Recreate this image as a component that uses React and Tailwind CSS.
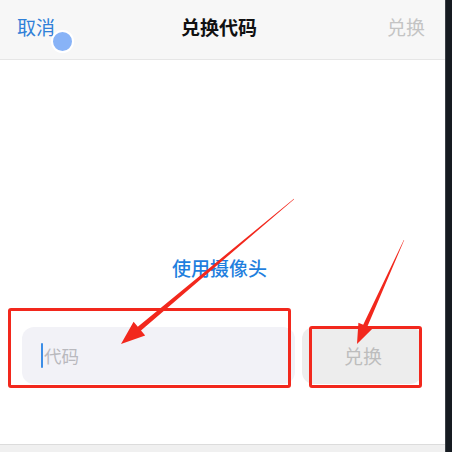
import React from "react";

function arrowPoints(t, p, headLen, headW, w0, w1) {
  const dx = p[0] - t[0];
  const dy = p[1] - t[1];
  const len = Math.hypot(dx, dy);
  const ux = dx / len;
  const uy = dy / len;
  const nx = -uy;
  const ny = ux;
  const bx = p[0] - ux * headLen;
  const by = p[1] - uy * headLen;
  const pts = [
    [t[0] + (nx * w0) / 2, t[1] + (ny * w0) / 2],
    [bx + (nx * w1) / 2, by + (ny * w1) / 2],
    [bx + (nx * headW) / 2, by + (ny * headW) / 2],
    [p[0], p[1]],
    [bx - (nx * headW) / 2, by - (ny * headW) / 2],
    [bx - (nx * w1) / 2, by - (ny * w1) / 2],
    [t[0] - (nx * w0) / 2, t[1] - (ny * w0) / 2],
  ];
  return pts.map((q) => q[0].toFixed(1) + "," + q[1].toFixed(1)).join(" ");
}

export default function App() {
  const font = { fontFamily: '"Noto Sans CJK SC", "Noto Sans", sans-serif' };
  return (
    <div className="relative flex w-[452px] h-[452px] overflow-hidden bg-white" style={font}>
      <div className="flex flex-col w-[445px] h-full">
        <div className="grid grid-cols-[1fr_auto_1fr] items-center h-[60px] pb-[6px] bg-[#f7f7f7] border-b border-[#e6e6e6] px-[17px] pr-[20px]">
          <span className="justify-self-start text-[19px] leading-[26px] text-[#2f80d8]">取消</span>
          <span className="text-[19px] leading-[26px] font-bold text-[#111111] pr-[4px]">兑换代码</span>
          <span className="justify-self-end text-[19px] leading-[26px] text-[#c4c4c4]">兑换</span>
        </div>
        <div className="flex flex-col flex-1 bg-white">
          <div className="pt-[195px] flex justify-center">
            <span className="text-[19px] leading-[26px] font-medium text-[#1f7fde] pr-[6px]">使用摄像头</span>
          </div>
          <div className="mt-[46px] flex h-[57px]">
            <div className="ml-[22px] w-[273px] h-full rounded-[12px] bg-[#f2f2f7] flex items-center pl-[19px]">
              <span className="w-[2px] h-[25px] bg-[#3b8de6] rounded-[1px]"></span>
              <span className="ml-[1px] text-[17.5px] leading-[24px] text-[#b9b9be]">代码</span>
            </div>
            <div className="ml-[7px] w-[120px] h-full rounded-[12px] bg-[#ededed] flex items-center justify-center pl-[2px]">
              <span className="text-[19px] leading-[26px] text-[#bdbdbd]">兑换</span>
            </div>
          </div>
          <div className="flex-1"></div>
          <div className="h-[8px] bg-[#f0f0f0] border-t border-[#dcdcdc]"></div>
        </div>
      </div>
      <div className="w-[7px] h-full bg-[#161b21] border-l border-[#3a3f45]"></div>

      {/* touch indicator */}
      <div className="absolute left-[51px] top-[30px] w-[23px] h-[23px] rounded-full bg-[#88b3f7] border-[2px] border-white"></div>

      {/* annotation boxes */}
      <div className="absolute left-[8px] top-[308px] w-[283px] h-[80px] rounded-[3px] border-[3px] border-[#f2281d]"></div>
      <div className="absolute left-[309px] top-[326px] w-[113px] h-[62px] rounded-[3px] border-[3px] border-[#f2281d]"></div>

      {/* arrows */}
      <svg className="absolute left-0 top-0 pointer-events-none" width="452" height="452" viewBox="0 0 452 452">
        <polygon points={arrowPoints([294, 199], [121, 344], 24, 18, 0.4, 5)} fill="#f2281d" />
        <polygon points={arrowPoints([404, 240], [357, 344], 20, 15, 0.4, 4.5)} fill="#f2281d" />
      </svg>
    </div>
  );
}
